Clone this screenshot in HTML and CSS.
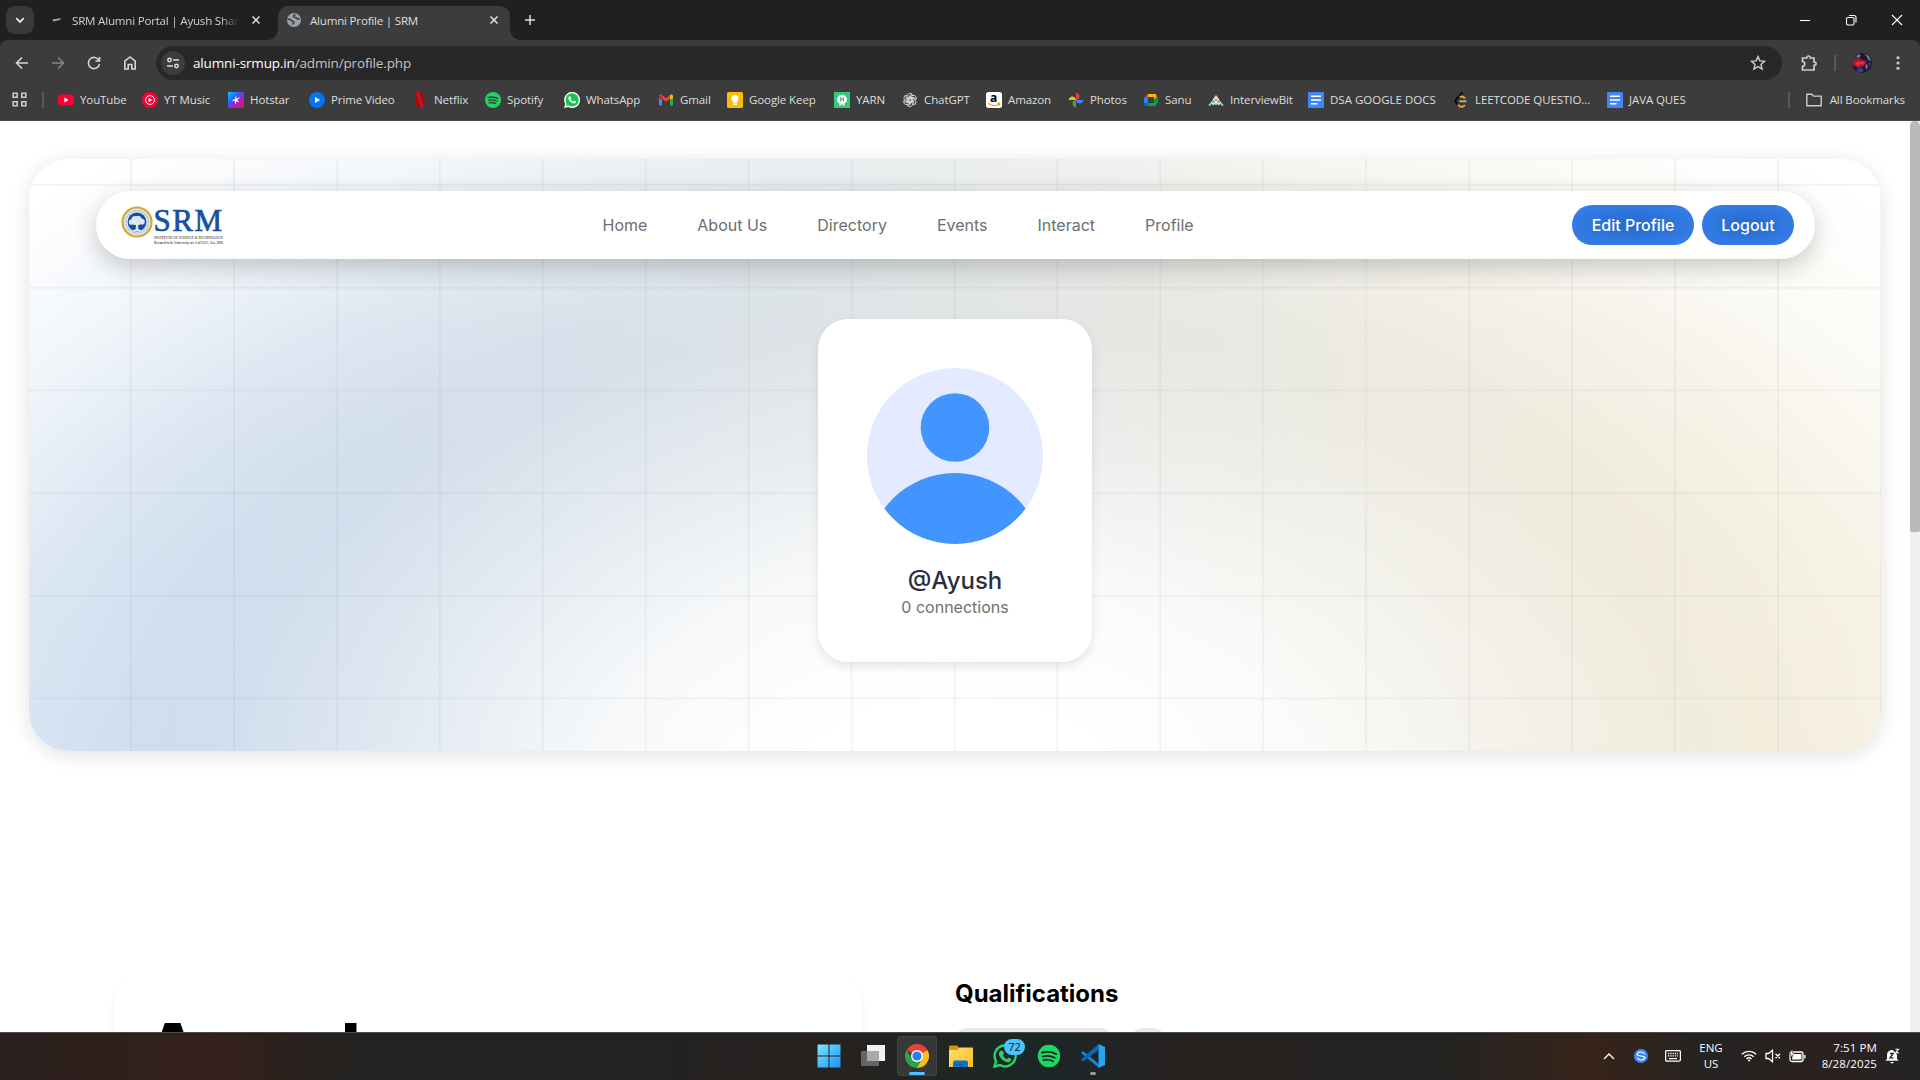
FILE: index.html
```html
<!DOCTYPE html>
<html lang="en">
<head>
<meta charset="utf-8">
<title>Alumni Profile | SRM</title>
<link rel="stylesheet" href="styles.css">
</head>
<body>
<header class="browser">
  <div class="tabstrip">
    <div class="tab-search"><svg width="10" height="7" viewBox="0 0 10 7"><path d="M1.2 1.2 5 5l3.800-3.800" fill="none" stroke="#e8e8e8" stroke-width="1.8"/></svg></div>
    <div class="tab tab-idle">
      <svg class="fav" viewBox="0 0 16 16"><path d="M4 7.500l9-1.200-1 1.700-4 .8-3.500.9 1-1.300z" fill="#aaa"/></svg>
      <span class="tab-title faded">SRM Alumni Portal | Ayush Sharma</span>
      <svg class="x" viewBox="0 0 8 8"><path d="M.5.5l7 7m0-7l-7 7"/></svg>
    </div>
    <div class="tab tab-active">
      <svg class="fav" viewBox="0 0 16 16"><circle cx="8" cy="8" r="7" fill="#9aa0a6"/><path d="M1.500 7.200c2-.2 3.200.3 4 1.300.8.9 2.300.6 2.300 1.800 0 1-1 1.200-1.300 2.200M9.500 2.500c-1.800.6-2.600 1.600-1.500 2.500 1 .8 2.300.2 2.800 1.300.4 1 1.500 1 2.700.7" fill="none" stroke="#3c3c3c" stroke-width="1.600"/></svg>
      <span class="tab-title">Alumni Profile | SRM</span>
      <svg class="x" viewBox="0 0 8 8"><path d="M.5.5l7 7m0-7l-7 7"/></svg>
    </div>
    <svg class="plus" viewBox="0 0 10 10"><path d="M5 0v10M0 5h10"/></svg>
    <div class="window-buttons">
      <svg viewBox="0 0 12 12"><path d="M1 6.500h10"/></svg>
      <svg viewBox="0 0 12 12"><rect x="1.500" y="3.500" width="7.500" height="7.500" rx="1.500"/><path d="M4 1.500h5a2 2 0 0 1 2 2v5"/></svg>
      <svg viewBox="0 0 12 12"><path d="M1 1l10 10M11 1L1 11"/></svg>
    </div>
  </div>
  <div class="toolbar">
    <div class="nav-icons">
      <svg viewBox="0 0 16 16"><path d="M14 8H3M8 2.500L2.500 8 8 13.500"/></svg>
      <svg class="dim" viewBox="0 0 16 16"><path d="M2 8h11M8 2.500L13.500 8 8 13.500"/></svg>
      <svg viewBox="0 0 16 16"><path d="M13 5.500A5.600 5.600 0 1 0 13.500 9M13.500 2v4h-4"/></svg>
      <svg viewBox="0 0 16 16"><path d="M2.800 6.200 8 2l5.200 4.200V14H9.800V9.500H6.200V14H2.800z"/></svg>
    </div>
    <div class="omnibox">
      <span class="tune"><svg viewBox="0 0 14 14"><circle cx="3.500" cy="4" r="1.700"/><path d="M7 4h6M1 10h6"/><circle cx="10.500" cy="10" r="1.700"/></svg></span>
      <span class="url"><b>alumni-srmup.in</b>/admin/profile.php</span>
      <svg class="star" viewBox="0 0 16 16"><path d="M8 1.600l1.900 4.300 4.600.4-3.500 3.100 1.100 4.600L8 11.600 3.900 14 5 9.400 1.500 6.300l4.600-.4z"/></svg>
    </div>
    <svg class="puzzle" viewBox="0 0 18 18"><path d="M2.500 4h4.300c-.3-2.700 3.700-2.700 3.400 0h3.800v4c2.700-.3 2.700 3.700 0 3.400V16H2.500v-3.600c3-.3 3-4.600 0-4.900z"/></svg>
    <i class="sep"></i>
    <svg class="avatar" viewBox="0 0 20 20"><clipPath id="av"><circle cx="10" cy="10" r="10"/></clipPath><g clip-path="url(#av)"><path fill="#25152f" d="M0 0h20v20H0z"/><path fill="#84203d" d="M0 7l6-3 5 3 4 1-3 5-6 2-6-3z"/><path fill="#6f7992" d="M12 1l5 2 2 5-3-1-1-3zM14 11l2 1-1 5-2-3zM4 3l3-2 2 2-3 2z"/><path fill="#ff252f" d="M3 10l3-2 2 1 3-1 2 2-2 2-2-1-2 2-3-1z"/><path fill="#34408c" d="M4 17l5-3 3 4-5 2zM0 4l4-2-1 4zM16 9l3 1-1 4z"/></g></svg>
    <svg class="dots" viewBox="0 0 4 16"><circle cx="2" cy="2" r="1.800"/><circle cx="2" cy="8" r="1.800"/><circle cx="2" cy="14" r="1.800"/></svg>
  </div>
  <div class="bookmarks">
    <svg class="apps" viewBox="0 0 15 15"><path d="M1.200 1.200h4v4h-4zM9.800 1.200h4v4h-4zM1.200 9.800h4v4h-4zM9.800 9.800h4v4h-4z"/></svg>
    <i class="sep"></i>
    <ul>
      <li><svg viewBox="0 0 16 16"><rect y="2.500" width="16" height="11" rx="3" fill="#f03"/><path d="M6.400 5.600v4.800L10.500 8z" fill="#fff"/></svg>YouTube</li>
      <li><svg viewBox="0 0 16 16"><circle cx="8" cy="8" r="8" fill="#f03"/><circle cx="8" cy="8" r="4.400" fill="none" stroke="#fff"/><path d="M6.600 5.700v4.600L10.300 8z" fill="#fff"/></svg>YT Music</li>
      <li><svg viewBox="0 0 16 16"><defs><linearGradient id="hs" x2="1" y2="1"><stop stop-color="#08c8ff"/><stop offset=".35" stop-color="#2864f8"/><stop offset=".6" stop-color="#a51ed0"/><stop offset="1" stop-color="#f20a64"/></linearGradient></defs><path fill="url(#hs)" d="M0 0h16v16H0z"/><path fill="#fff" d="M8 3l.5 3.800L12.500 5 9.400 8l2 2.600-2.800-1.400L7.200 13l-.4-3.800L3.500 8l3.500-.7z"/></svg>Hotstar</li>
      <li><svg viewBox="0 0 16 16"><circle cx="8" cy="8" r="8" fill="#0874f5"/><path d="M6 5v6L11 8z" fill="#fff"/></svg>Prime Video</li>
      <li><svg viewBox="0 0 16 16"><path d="M3.800 0h2.700v16l-2.700.2zM9.500 0h2.700v16H9.500z" fill="#b1060f"/><path d="M3.800 0h2.700l5.700 16H9.500z" fill="#e50914"/></svg>Netflix</li>
      <li><svg viewBox="0 0 16 16"><circle cx="8" cy="8" r="8" fill="#1ed760"/><path d="M3 5.600c3.500-1 7-.7 10 1M3.600 8.300c3-.8 5.800-.5 8.300.9M4.100 10.800c2.400-.6 4.600-.3 6.600.8" fill="none" stroke="#303b33" stroke-width="1.300" stroke-linecap="round"/></svg>Spotify</li>
      <li><svg viewBox="0 0 16 16"><path d="M0 16l1.200-4A8 8 0 1 1 4.300 15z" fill="#fff"/><circle cx="8.100" cy="7.900" r="6.600" fill="#13c64b"/><path d="M2 14l1-3 2 2z" fill="#13c64b"/><path d="M5.300 4.200l1.300.2.700 1.800-.7 1c.7 1.200 1.500 1.900 2.700 2.400l.9-1 2 .9c-.2 1.500-1.300 2.100-2.600 1.900C7 10.900 4.600 8.600 4.300 6.300c0-.8.300-1.500 1-2.100z" fill="#fff"/></svg>WhatsApp</li>
      <li><svg viewBox="0 0 16 16"><path d="M1 4v9.500h3V7z" fill="#4285f4"/><path d="M12 7v6.500h3V4z" fill="#34a853"/><path d="M1 4.200C1 2.500 2.800 2.200 4 3.100l4 3 4-3c1.200-.9 3-.6 3 1.100L8 9.700z" fill="#ea4335"/><path d="M12 3.200c1.500-1 3-.4 3 1.200v1.300l-3 2.200z" fill="#fbbc04"/><path d="M1 4.400V5.700l3 2.200V3.200z" fill="#c5221f"/></svg>Gmail</li>
      <li><svg viewBox="0 0 16 16"><rect width="16" height="16" rx="1.500" fill="#fbbc04"/><circle cx="8" cy="6.500" r="3.500" fill="#fff"/><path d="M6 9h4v1.700H6zM6 11.500h4V13H6z" fill="#fff"/></svg>Google Keep</li>
      <li><svg viewBox="0 0 16 16"><path d="M0 0h16v16H0z" fill="#37c978"/><path d="M5 3.500l3-.7 3 .7 2 3-.5 3.500-2 1.500V14H9.300v-1.500H6.700V14H5.500v-2.500L3.500 10 3 6.500z" fill="#fff"/><path d="M6.700 5v4.500M9.300 5v4.500M6.700 7.300h2.600" stroke="#37a970" fill="none"/></svg>YARN</li>
      <li><svg viewBox="0 0 16 16"><g fill="none" stroke="#ddd" stroke-width=".9"><path id="petal" d="M8.600 10.500 5.300 8.600V4.200a2.900 2.900 0 0 1 5-2l-3.100 1.900v3.600"/><use href="#petal" transform="rotate(60 8 8)"/><use href="#petal" transform="rotate(120 8 8)"/><use href="#petal" transform="rotate(180 8 8)"/><use href="#petal" transform="rotate(240 8 8)"/><use href="#petal" transform="rotate(300 8 8)"/></g></svg>ChatGPT</li>
      <li><svg viewBox="0 0 16 16"><rect width="16" height="16" rx="2.500" fill="#fff"/><text x="4" y="10" class="amazon-a">a</text><path d="M2 11.300c3.500 2.600 8 2.800 11.400.7M11.600 11.400l2.200-.2-.4 2.200" fill="none" stroke="#f90" stroke-width="1.200"/></svg>Amazon</li>
      <li><svg viewBox="0 0 16 16"><path d="M8 .5c2.300.5 3.500 2 3.500 3.900 0 1.600-1 3.100-3.500 3.600z" fill="#ea4335"/><path d="M15.500 8c-.5 2.300-2 3.500-3.900 3.500-1.600 0-3.100-1-3.600-3.500z" fill="#4285f4"/><path d="M8 15.500c-2.300-.5-3.500-2-3.500-3.900C4.500 10 5.500 8.500 8 8z" fill="#34a853"/><path d="M.5 8C1 5.700 2.500 4.500 4.400 4.500 6 4.500 7.500 5.500 8 8z" fill="#fbbc04"/></svg>Photos</li>
      <li><svg viewBox="0 0 16 16"><path d="M5 2h7a1.500 1.500 0 0 1 1.500 1.500V6L11 8V5H5z" fill="#fbbc04"/><path d="M1 6l4-4v4z" fill="#ea4335"/><path d="M1 6h4v5H1z" fill="#2684fc"/><path d="M1 11h4v3H2.500A1.500 1.500 0 0 1 1 12.500z" fill="#0066da"/><path d="M5 11h6V8l2.500-2 1.500-1.500v7L13.500 11v1.500A1.500 1.500 0 0 1 12 14H5z" fill="#00ac47"/><path d="M11 8l2.500-2v4z" fill="#00832d"/></svg>Sanu</li>
      <li><svg viewBox="0 0 16 16"><path d="M8 3l3 4H5z" fill="#e5e5e5"/><path d="M5 7h6l1.500 2.500h-9z" fill="#f19a36"/><path d="M3.500 9.500h9L16 13.500h-2.500L12 12l-1.500 1.500L9.300 12 8 13.500 6.700 12l-1.200 1.500L4 12l-1.500 1.500H0z" fill="#8fd5dc"/><path d="M5 7l3 3 3-3M3.500 10l2 2.500 2.500-2.500 2.500 2.500 2-2.500" fill="none" stroke="#f4f4f4" stroke-width=".9"/></svg>InterviewBit</li>
      <li><svg viewBox="0 0 16 16"><rect width="16" height="16" rx="1" fill="#4285f4"/><path d="M3 4.300h10M3 8h10M3 11.700h6.500" stroke="#fff" stroke-width="1.600"/></svg>DSA GOOGLE DOCS</li>
      <li><svg viewBox="0 0 16 16"><path d="M9.500.3 3.200 7.300c-1 1.200-1 2.300 0 3.400l2 2.300" fill="none" stroke="#090909" stroke-width="1.900"/><path d="M12 6.500C10 4.400 8.300 4 6.800 5.200M5.200 12.700l.8.9c1.500 1.700 4 1.600 6-.5" fill="none" stroke="#f6a021" stroke-width="1.900"/><path d="M6.500 9.300h7" stroke="#bbb" stroke-width="1.700"/></svg>LEETCODE QUESTIO...</li>
      <li><svg viewBox="0 0 16 16"><rect width="16" height="16" rx="1" fill="#4285f4"/><path d="M3 4.300h10M3 8h10M3 11.700h6.500" stroke="#fff" stroke-width="1.600"/></svg>JAVA QUES</li>
    </ul>
    <i class="sep"></i>
    <span class="all"><svg viewBox="0 0 16 14"><path d="M.8 1.200h5l1.700 1.900h7.700v9.600H.8z"/></svg>All Bookmarks</span>
  </div>
</header>

<div class="viewport">
  <main class="page">
    <section class="hero">
      <nav class="navbar">
        <div class="logo">
          <svg class="seal" viewBox="0 0 32 32"><circle cx="16" cy="16" r="14.500" fill="#e7ebf4" stroke="#d1a92c" stroke-width="2.200"/><circle cx="16" cy="16" r="11.300" fill="none" stroke="#b3bfd6" stroke-width="2.200" stroke-dasharray="1 .7"/><circle cx="16" cy="16" r="9.400" fill="#174f9f"/><path d="M8 17.500c-.8-2 .3-4 2.400-4.300.4-2.300 2.300-3.600 4.300-3 2.600-1.300 5.300-.2 6 2.300 2.300.3 3.800 2.600 2.800 4.800-.8 1.500-2.500 1.700-3.700.9-.8.9-1.900 1-2.800.5l.4 4.300 3.600 2h-10l3.700-2 .3-4.300c-1 .6-2.200.4-2.900-.5-1.300.9-3.200.7-4.100-.7z" fill="#dfe6f3"/></svg>
          <div class="wordmark"><strong>SRM</strong><svg viewBox="0 0 70 12"><text x="0" y="4.500" textLength="69" lengthAdjust="spacingAndGlyphs">INSTITUTE OF SCIENCE &amp; TECHNOLOGY</text><text x="0" y="9.800" textLength="69" lengthAdjust="spacingAndGlyphs">Deemed to be University u/s 3 of UGC Act, 1956</text></svg></div>
        </div>
        <div class="links"><a>Home</a><a>About Us</a><a>Directory</a><a>Events</a><a>Interact</a><a>Profile</a></div>
        <div class="actions"><a class="btn edit">Edit Profile</a><a class="btn logout">Logout</a></div>
      </nav>
      <article class="profile-card">
        <svg class="portrait" viewBox="0 0 176 176"><clipPath id="round"><circle cx="88" cy="88" r="88"/></clipPath><circle cx="88" cy="88" r="88" fill="#e4eaff"/><circle cx="88" cy="59.500" r="34.300" fill="#4294ff"/><circle cx="88" cy="193" r="88" fill="#4294ff" clip-path="url(#round)"/></svg>
        <h1>@Ayush</h1>
        <p>0 connections</p>
      </article>
    </section>
    <section class="details">
      <article class="about"><h2>Ayush</h2></article>
      <aside><h3>Qualifications</h3><div class="pills"><span></span><span></span></div></aside>
    </section>
  </main>
  <div class="scrollbar"><i></i></div>
</div>

<footer class="taskbar">
  <div class="pinned">
    <span class="app"><svg viewBox="0 0 24 24"><defs><linearGradient id="win" x2="1" y2="1"><stop stop-color="#7de6ff"/><stop offset="1" stop-color="#1593f5"/></linearGradient></defs><path fill="url(#win)" d="M.5.500h11v11H.5zm12 0h11v11h-11zM.5 12.500h11v11H.5zm12 0h11v11h-11z"/></svg></span>
    <span class="app"><svg viewBox="0 0 24 24"><path d="M0 7h18v15H0z" fill="#666"/><path d="M6 1h18v16H6z" fill="#f1f1f1"/><path d="M6 7h12v10H6z" fill="#aaa"/></svg></span>
    <span class="app on"><svg viewBox="0 0 24 24"><path d="M12 12 1.600 6A12 12 0 0 1 22.400 6z" fill="#ea4335"/><path d="M12 12 22.400 6A12 12 0 0 1 12 24z" fill="#fbc116"/><path d="M12 24A12 12 0 0 1 1.600 6L7.200 15 12 17.500l4.500-1.200z" fill="#2ba24c"/><path d="M12 6.500h10.600L22 5.300 12 5z" fill="#ea4335"/><circle cx="12" cy="12" r="6" fill="#fff"/><circle cx="12" cy="12" r="4.600" fill="#2d7df0"/></svg></span>
    <span class="app"><svg viewBox="0 0 24 24"><defs><linearGradient id="fo" x2="1" y2="1"><stop stop-color="#ffdf70"/><stop offset="1" stop-color="#fdbd25"/></linearGradient></defs><path d="M0 3q0-1.500 1.500-1.500H8L10.500 4 8 7H0z" fill="#d99300"/><path d="M0 6h8l2.500-2.500H23q1 0 1 1V23H0z" fill="url(#fo)"/><path d="M4 23v-4.500q0-2 2-2h11q2 0 2 2V23z" fill="#0876ce"/><path d="M7 20h9v1H7z" fill="#0360aa"/></svg></span>
    <span class="app"><svg viewBox="0 0 24 24"><path d="M1.500 22.500 3 17a10.500 10.500 0 1 1 4 4z" fill="none" stroke="#25d366" stroke-width="2.400"/><path d="M8 6.500l2 .5 1 3-1.200 1.500c1 1.800 2.300 3 4 3.800l1.600-1.700 3 1.400c-.2 2.600-2 3.500-4 3.200-4.200-.8-8-4.500-8.500-8.200 0-1.500.8-2.800 2.100-3.500z" fill="#25d366"/></svg><b class="badge">72</b></span>
    <span class="app"><svg viewBox="0 0 24 24"><circle cx="12" cy="12" r="11.200" fill="#1ed760"/><path d="M5 8.700c5-1.400 10-1 14.200 1.400M5.700 12.500c4.200-1.100 8.200-.7 12 1.300M6.500 16c3.400-.8 6.500-.5 9.500 1.200" fill="none" stroke="#1b2922" stroke-width="1.800" stroke-linecap="round"/></svg></span>
    <span class="app ran"><svg viewBox="0 0 24 24"><path d="M0 9 2 7l16 13v4z" fill="#1687d1"/><path d="M0 15.500 17.500 0v6L2 17.500z" fill="#0769b5"/><path d="M17.500 0 24 3v18l-6.500 3z" fill="#26a4ef"/></svg></span>
  </div>
  <div class="tray">
    <svg class="caret" viewBox="0 0 12 8"><path d="M1 7l5-5 5 5"/></svg>
    <svg class="sync" viewBox="0 0 14 14"><circle cx="7" cy="7" r="7" fill="#4287f5" stroke="none"/><path d="M3 6.200c.6-3.800 6-4.300 7.600-1M11 7.800c-.6 3.800-6 4.300-7.600 1M3 6.200c2.500-.3 5.500 1.900 8 1.600" stroke-width="1.100"/></svg>
    <svg class="keys" viewBox="0 0 16 12"><rect x=".6" y=".6" width="14.800" height="10.500" rx="1.300"/><path d="M3 3.500h10M3 5.900h10" stroke-dasharray="1.300 1"/><path d="M4 8.600h8"/></svg>
    <span class="lang">ENG<br>US</span>
    <svg class="wifi" viewBox="0 0 16 12"><path d="M.8 4.200a10.500 10.500 0 0 1 14.400 0M3.200 6.700a7 7 0 0 1 9.600 0M5.500 9a3.600 3.600 0 0 1 5 0"/><circle cx="8" cy="10.600" r="1" fill="#fff" stroke="none"/></svg>
    <svg class="sound" viewBox="0 0 16 14"><path d="M1 4.500h2.500L7.500 1.200v11.600L3.500 9.500H1zM10.500 4.800l4.500 4.500m0-4.500l-4.500 4.500"/></svg>
    <svg class="battery" viewBox="0 0 17 14"><rect x="1" y="3" width="13" height="9.500" rx="2"/><path d="M4 5h8.500v5.500H3z" fill="#fff" stroke="none"/><path d="M15.800 6v3.500"/><path d="M3.500 0 0 5h2L1.500 8.500 5.500 4H3.200z" fill="#fff" stroke="#26201f" stroke-width=".5"/></svg>
    <span class="clock">7:51 PM<br>8/28/2025</span>
    <svg class="bell" viewBox="0 0 15 16"><path d="M2 11V6.500a4.500 4.500 0 0 1 7-3.600l3 4V11l1.500 1.800H.5zM5 14h4l-2 1.700z" fill="#fff" stroke="none"/><path d="M5 5.500h3.200L5 9.800h3.500" stroke="#29201f"/><path d="M10.500 1.200h3l-3 3.700h3.300" stroke-width="1.100"/></svg>
  </div>
</footer>
</body>
</html>
```
FILE: styles.css
```css
* { box-sizing: border-box; }
body { margin: 0; width: 1920px; height: 1080px; overflow: hidden; display: flex; flex-direction: column; background: #fff; font-family: Inter, sans-serif; }
svg { display: block; flex: none; }
h1, h2, h3, p, ul { margin: 0; padding: 0; font-weight: inherit; }

/* browser frame */
.browser { height: 121px; flex: none; background: #1f2020; color: #dedede; font: 12px "Open Sans", sans-serif; border-bottom: 1px solid #4a4a4a; }
.tabstrip { height: 40px; display: flex; align-items: center; padding-left: 6px; }
.tab-search { width: 28px; height: 28px; border-radius: 9px; background: #3a3a3a; display: flex; align-items: center; justify-content: center; }
.tab { display: flex; align-items: center; }
.tab .fav { width: 16px; height: 16px; }
.tab-idle { width: 244px; padding: 0 18px 0 14px; }
.tab-active { width: 232px; height: 34px; margin-top: 6px; padding: 0 12px 6px 8px; background: #3c3c3c; border-radius: 10px 10px 0 0; position: relative; }
.tab-active::before, .tab-active::after { content: ""; position: absolute; bottom: 0; width: 10px; height: 10px; }
.tab-active::before { left: -10px; background: radial-gradient(circle at 0 0, transparent 9.5px, #3c3c3c 10px); }
.tab-active::after { right: -10px; background: radial-gradient(circle at 100% 0, transparent 9.5px, #3c3c3c 10px); }
.tab-title { margin-left: 8px; flex: 1; white-space: nowrap; overflow: hidden; font-size: 11.600px; letter-spacing: -.22px; }
.tab-idle .tab-title { margin-right: 12px; color: #d0d0d0; margin-left: 8px; }
.faded { -webkit-mask-image: linear-gradient(90deg, #000 88%, transparent); mask-image: linear-gradient(90deg, #000 88%, transparent); }
.x { width: 8px; height: 8px; stroke: #e3e3e3; stroke-width: 1.500; fill: none; }
.plus { width: 10px; height: 10px; margin-left: 15px; stroke: #ddd; stroke-width: 1.500; }
.window-buttons { margin-left: auto; display: flex; gap: 34px; padding-right: 17px; }
.window-buttons svg { width: 12px; height: 12px; fill: none; stroke: #fff; stroke-width: 1.100; }
.toolbar { height: 42px; background: #3c3c3c; border-radius: 8px 8px 0 0; display: flex; align-items: center; padding: 4px 20px 0 14px; }
.nav-icons { display: flex; gap: 20px; }
.nav-icons svg { width: 16px; height: 16px; stroke: #d5d5d5; stroke-width: 1.600; fill: none; }
.nav-icons .dim { stroke: #858585; }
.omnibox { width: 1626px; height: 34px; margin-left: 18px; border-radius: 17px; background: #282828; display: flex; align-items: center; padding: 0 16px 0 5px; }
.tune { width: 24px; height: 24px; border-radius: 50%; background: #3c3c3c; display: flex; align-items: center; justify-content: center; }
.tune svg { width: 14px; height: 14px; fill: none; stroke: #ddd; stroke-width: 1.500; }
.url { margin-left: 8px; flex: 1; font-size: 13.500px; letter-spacing: -.15px; color: #c4c4c4; }
.url b { font-weight: 400; color: #fff; }
.star { width: 16px; height: 16px; fill: none; stroke: #ccc; stroke-width: 1.400; }
.puzzle { width: 18px; height: 18px; margin-left: 18px; fill: none; stroke: #ccc; stroke-width: 1.700; }
.sep { width: 2px; height: 16px; background: #5a5a5a; flex: none; }
.toolbar .sep { margin: 0 16px; }
.avatar { width: 20px; height: 20px; }
.dots { width: 4px; height: 14px; margin-left: auto; fill: #ccc; }
.bookmarks { height: 38px; background: #3c3c3c; display: flex; align-items: center; padding: 0 15px 3px 12px; font-size: 11.500px; letter-spacing: -.1px; line-height: 16px; }
.apps { width: 15px; height: 15px; fill: none; stroke: #ccc; stroke-width: 1.600; }
.apps + .sep { margin: 0 14px 0 15px; }
.bookmarks ul { display: flex; list-style: none; flex: 1; }
.bookmarks li { display: flex; align-items: center; gap: 6px; white-space: nowrap; width: 82px; }
.bookmarks li svg { width: 16px; height: 16px; }
.bookmarks li:nth-child(1) { width: 84px; }
.bookmarks li:nth-child(2) { width: 86px; }
.bookmarks li:nth-child(3) { width: 81px; }
.bookmarks li:nth-child(4) { width: 103px; }
.bookmarks li:nth-child(5) { width: 73px; }
.bookmarks li:nth-child(6) { width: 79px; }
.bookmarks li:nth-child(7) { width: 94px; }
.bookmarks li:nth-child(8) { width: 69px; }
.bookmarks li:nth-child(9) { width: 107px; }
.bookmarks li:nth-child(10) { width: 68px; }
.bookmarks li:nth-child(11) { width: 84px; }
.bookmarks li:nth-child(13) { width: 75px; }
.bookmarks li:nth-child(14) { width: 65px; }
.bookmarks li:nth-child(15) { width: 100px; }
.bookmarks li:nth-child(16) { width: 145px; letter-spacing: 0; }
.bookmarks li:nth-child(17) { width: 154px; letter-spacing: -.08px; }
.amazon-a { font: bold 12px "Open Sans", sans-serif; fill: #000; }
.all { display: flex; align-items: center; gap: 8px; margin-left: 16px; white-space: nowrap; }
.all svg { width: 16px; height: 14px; fill: none; stroke: #ccc; stroke-width: 1.400; }

/* page */
.viewport { flex: 1; min-height: 0; display: flex; overflow: hidden; }
.page { flex: 1; padding: 38px 29px 0; }
.hero {
  height: 592px; border-radius: 40px; display: flex; flex-direction: column; align-items: center; padding-top: 32px;
  box-shadow: 0 4px 20px rgba(0, 0, 0, .12);
  background:
    linear-gradient(90deg, rgba(110, 120, 130, .075) 2px, transparent 2px) 101px 0 / 102.940px 100%,
    linear-gradient(rgba(110, 120, 130, .075) 2px, transparent 2px) 0 25px / 100% 102.700px,
    radial-gradient(ellipse 1130px 720px at 50% 108%, #fff 14%, rgba(255, 255, 255, .8) 32%, rgba(255, 255, 255, .35) 50%, rgba(255, 255, 255, .05) 66%, rgba(255, 255, 255, .08) 73%, rgba(255, 255, 255, .35) 86%, rgba(255, 255, 255, .75) 100%, #fff 116%),
    linear-gradient(90deg, #c9daee, #d5dfe9 30%, #e0e4e3 52%, #ebe9df 72%, #f3ecd8);
}
.navbar { width: 1719px; height: 68px; flex: none; border-radius: 34px; background: #fff; box-shadow: 0 8px 24px rgba(0, 0, 0, .2); display: grid; grid-template-columns: 482px 1fr auto; align-items: center; padding: 0 21px 0 25px; }
.logo { display: flex; height: 40px; gap: 1px; }
.seal { width: 32px; height: 32px; margin-top: 1px; }
.wordmark { width: 72px; padding-top: 0; }
.wordmark strong { display: block; height: 29px; font: 400 31px/31px "Liberation Serif", serif; color: #1750a2; letter-spacing: 1.500px; white-space: nowrap; -webkit-text-stroke: .7px #1750a2; }
.wordmark svg { width: 70px; height: 12px; font: bold 4.500px "Liberation Serif", serif; fill: #555; }
.links { display: flex; gap: 50px; font-size: 16px; color: #6e6e6e; white-space: nowrap; }
.actions { display: flex; gap: 8px; }
.btn { height: 40px; border-radius: 20px; display: flex; align-items: center; justify-content: center; padding-left: 1px; font-size: 16px; font-weight: 500; color: #fff; background: radial-gradient(ellipse at center, #256bcc, #3880ec); }
.edit { width: 122px; }
.logout { width: 92px; }
.profile-card { width: 274px; height: 343px; margin-top: 60px; border-radius: 30px; background: #fff; box-shadow: 0 4px 10px rgba(0, 0, 0, .1); display: flex; flex-direction: column; align-items: center; padding-top: 49px; }
.portrait { width: 176px; height: 176px; }
.profile-card h1 { margin-top: 22px; font-size: 24px; font-weight: 500; line-height: 30px; color: #2c2c44; }
.profile-card p { margin-top: -1px; font-size: 16px; line-height: 24px; color: #707070; }
.details { display: flex; gap: 93px; margin: 223px 0 0 85px; }
.about { width: 748px; height: 300px; border-radius: 30px; padding: 29px; box-shadow: 0 4px 6px rgba(0, 0, 0, .06); }
.about h2 { font-size: 80px; line-height: 97px; font-weight: 700; color: #000; }
aside h3 { font-size: 24px; line-height: 30px; font-weight: 700; color: #000; margin-top: 5px; }
.pills { display: flex; gap: 19px; margin-top: 19px; }
.pills span { width: 157px; height: 40px; border-radius: 12px; background: #e9e9ea; }
.pills span + span { width: 34px; }
.scrollbar { width: 10px; background: #f0f0f0; }
.scrollbar i { display: block; height: 411px; background: #bababa; border-radius: 5px 5px 2px 2px; }

/* taskbar */
.taskbar { height: 48px; flex: none; border-top: 1px solid #4a4a4a; display: grid; grid-template-columns: 1fr auto; align-items: center; padding: 0 20px 1px 809px; color: #fff; font: 12px/16px "Open Sans", sans-serif;
  background: linear-gradient(90deg, #2a201f 0, #35201a 11%, #222322 19%, #222322 32%, #28211f 42%, #1f2623 50%, #1d2628 55%, #28211f 62%, #222423 74%, #37231a 83%, #252322 89%, #2b201f 95%, #242423 100%); }
.pinned { display: flex; gap: 4px; }
.app { width: 40px; height: 40px; display: flex; align-items: center; justify-content: center; border-radius: 4px; position: relative; }
.app svg { width: 24px; height: 24px; }
.on { background: #343837; box-shadow: inset 0 0 0 1px #404443; }
.on::after, .ran::after { content: ""; position: absolute; bottom: 1px; width: 16px; height: 3px; border-radius: 2px; background: #4cc2ff; }
.ran::after { width: 6px; background: #9a9a9a; }
.badge { position: absolute; left: 19px; top: 3px; width: 21px; height: 16px; border-radius: 8px; background: #4cc2ff; color: #101820; font: 11px/16px "Open Sans", sans-serif; text-align: center; }
.tray { display: flex; align-items: center; }
.tray svg { fill: none; stroke: #fff; stroke-width: 1.300; }
.caret { width: 12px; height: 8px; }
.sync { width: 14px; height: 14px; margin-left: 19px; }
.keys { width: 16px; height: 12px; margin-left: 17px; }
.lang { width: 26px; margin-left: 17px; text-align: center; font-size: 11.500px; }
.wifi { width: 16px; height: 12px; margin-left: 17px; }
.sound { width: 16px; height: 14px; margin-left: 8px; }
.battery { width: 17px; height: 14px; margin-left: 8px; }
.clock { width: 60px; margin-left: 11px; text-align: right; font-size: 11.500px; white-space: nowrap; letter-spacing: .1px; }
.bell { width: 15px; height: 16px; margin-left: 8px; }
```
